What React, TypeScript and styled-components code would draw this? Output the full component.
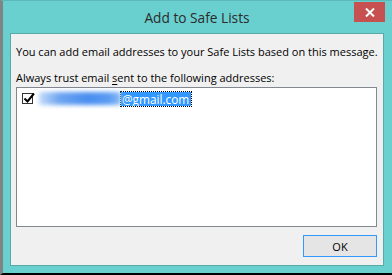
import React from 'react'
import styled, { createGlobalStyle } from 'styled-components'

const GlobalStyle = createGlobalStyle`
  html, body {
    margin: 0;
    padding: 0;
    background: #ffffff;
  }
  body {
    font-family: "Open Sans", "Noto Sans", sans-serif;
  }
`

const Frame = styled.div`
  width: 392px;
  height: 275px;
  box-sizing: border-box;
  display: flex;
  flex-direction: column;
  background: #6acfcf;
  border-left: 3px solid #7f8585;
  border-top: 1px solid #5fb8b8;
  border-bottom: 2px solid #000000;
  padding: 0 8px 7px 7px;
`

const TitleBar = styled.div`
  height: 32px;
  flex: none;
  display: flex;
  align-items: flex-start;
  justify-content: center;
  position: relative;
`

const Title = styled.div`
  margin-top: 7px;
  font-size: 13.7px;
  color: #2b2b2b;
`

const CloseButton = styled.div`
  position: absolute;
  right: -1px;
  top: 1px;
  width: 31px;
  height: 20px;
  background: #c75050;
  display: flex;
  align-items: center;
  justify-content: center;
`

const Body = styled.div`
  flex: 1;
  background: #f0f0f0;
  border: 1px solid #5aa9a9;
  display: flex;
  flex-direction: column;
  padding: 10px 6px 0 5px;
  font-size: 11px;
  color: #000000;
`

const Intro = styled.div`
  height: 16px;
  line-height: 16px;
  white-space: nowrap;
`

const Label = styled.div`
  margin-top: 10px;
  height: 16px;
  line-height: 16px;
  white-space: nowrap;

  u {
    text-decoration: underline;
    text-underline-offset: 2px;
  }
`

const ListBox = styled.div`
  margin-top: 1px;
  height: 140px;
  box-sizing: border-box;
  background: #ffffff;
  border: 1px solid #828790;
  padding: 3px 5px;
`

const Row = styled.div`
  display: flex;
  align-items: center;
  height: 15px;
`

const Check = styled.div`
  width: 11px;
  height: 11px;
  box-sizing: border-box;
  border: 1px solid #333333;
  background: #ffffff;
  position: relative;
  flex: none;
`

const Blurred = styled.span`
  display: inline-block;
  width: 82px;
  height: 13px;
  margin-left: 6px;
  background: linear-gradient(90deg, #c4dcf9, #6ea5f1 25%, #4a8ef0 60%, #5a9bf2 85%, #8dbdf6);
  filter: blur(2.2px);
`

const Selected = styled.span`
  display: inline-block;
  height: 14px;
  line-height: 14px;
  padding: 0 2px 0 1px;
  background: #3399ff;
  color: #ffffff;
  font-size: 11.8px;
  outline: 1px dotted #000000;
  outline-offset: 0;
`

const Footer = styled.div`
  display: flex;
  justify-content: flex-end;
  padding: 8px 0 0;
`

const Button = styled.button<{ $focused?: boolean }>`
  width: 74px;
  height: 22px;
  box-sizing: border-box;
  border: 1px solid ${p => (p.$focused ? '#3399ff' : '#adadad')};
  background: #e5e5e5;
  font-family: "Open Sans", "Noto Sans", sans-serif;
  font-size: 11px;
  color: #000000;
  padding: 0;
`

export default function App() {
  return (
    <>
      <GlobalStyle />
      <Frame>
        <TitleBar>
          <Title>Add to Safe Lists</Title>
          <CloseButton>
            <svg width="10" height="9" viewBox="0 0 10 9">
              <path d="M1 0.5 L9 8.5 M9 0.5 L1 8.5" stroke="#ffffff" strokeWidth="2" />
            </svg>
          </CloseButton>
        </TitleBar>
        <Body>
          <Intro>You can add email addresses to your Safe Lists based on this message.</Intro>
          <Label>
            Always trust email <u>s</u>ent to the following addresses:
          </Label>
          <ListBox>
            <Row>
              <Check>
                <svg width="13" height="12" viewBox="0 0 13 12" style={{ position: 'absolute', left: 0, top: -2 }}>
                  <path d="M1.5 6.5 L4.5 9.5 L11 1.5" stroke="#000000" strokeWidth="2" fill="none" />
                </svg>
              </Check>
              <Blurred />
              <Selected>@gmail.com</Selected>
            </Row>
          </ListBox>
          <Footer>
            <Button $focused>OK</Button>
          </Footer>
        </Body>
      </Frame>
    </>
  )
}
